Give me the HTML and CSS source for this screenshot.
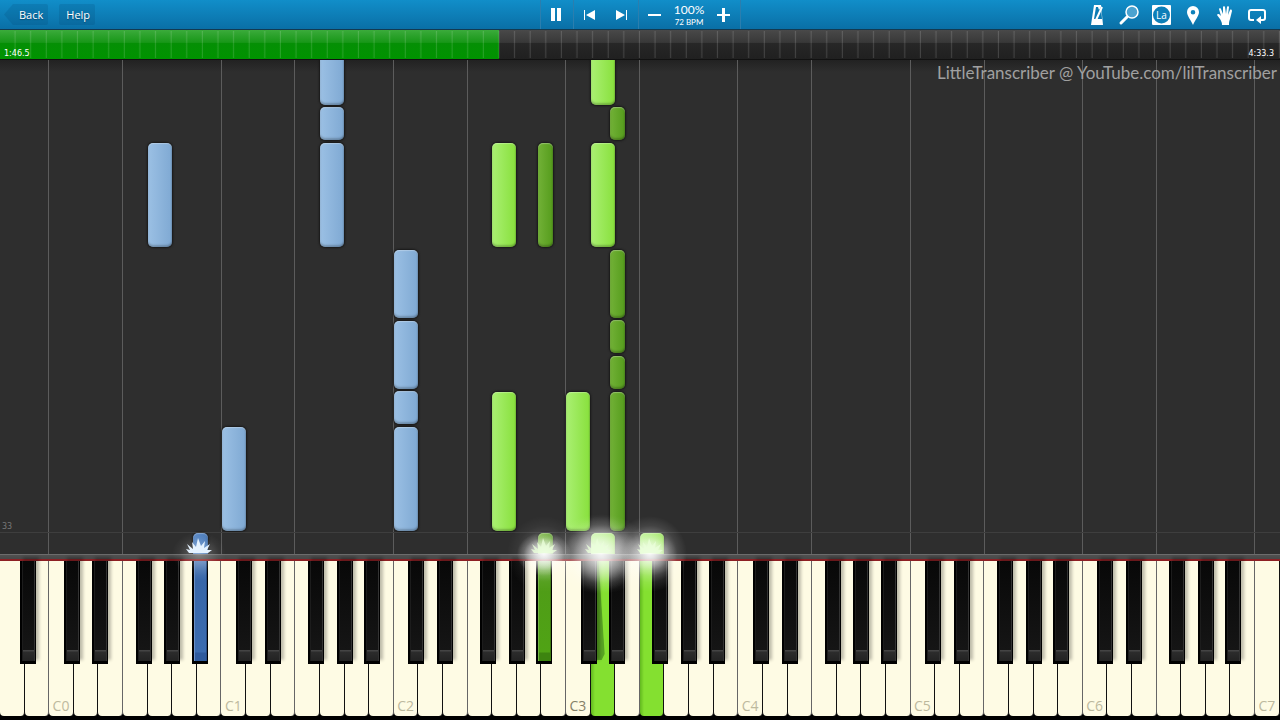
FILE: index.html
```html
<!DOCTYPE html>
<html lang="en">
<head>
    <meta charset="UTF-8">
    <meta name="viewport" content="width=device-width, initial-scale=1.0">
    <title>Piano Player</title>
    <link rel="stylesheet" href="styles.css">
</head>
<body>
    <header class="toolbar">
        <nav class="nav">
            <button class="nav-btn back-btn"><span>Back</span></button>
            <button class="nav-btn">Help</button>
        </nav>
        <div class="transport">
            <div class="group">
                <button class="icon-btn" aria-label="Pause">
                    <svg viewBox="0 0 24 24"><path d="M6 5h4v13H6zM12 5h4v13h-4z"/></svg>
                </button>
            </div>
            <div class="group">
                <button class="icon-btn" aria-label="Previous">
                    <svg viewBox="0 0 24 24"><path d="M6 7h1v10H6zM17 7v10l-9-5z"/></svg>
                </button>
                <button class="icon-btn" aria-label="Next">
                    <svg viewBox="0 0 24 24"><path d="M16 7h1v10h-1zM6 7v10l9-5z"/></svg>
                </button>
            </div>
            <div class="group">
                <button class="icon-btn" aria-label="Slower">
                    <svg viewBox="0 0 24 24"><path d="M5 11h13v2H5z"/></svg>
                </button>
                <div class="tempo">
                    <span class="percent">100%</span>
                    <span class="bpm">72 BPM</span>
                </div>
                <button class="icon-btn" aria-label="Faster">
                    <svg viewBox="0 0 24 24"><path d="M5 11h13v2H5zM10 5h3v14h-3z"/></svg>
                </button>
            </div>
        </div>
        <div class="tools">
            <button class="icon-btn" aria-label="Metronome">
                <svg viewBox="0 0 24 24">
                    <path d="M9 2h7l2 20H6z"/>
                    <path class="cut" d="M9 16l2-12h2l1 3 2-3 1 12z"/>
                    <path class="line" d="M11 17l6-13"/>
                </svg>
            </button>
            <button class="icon-btn" aria-label="Zoom">
                <svg viewBox="0 0 24 24">
                    <circle class="lens" cx="15" cy="9" r="6"/>
                    <path class="handle" d="M10 14l-6 6"/>
                </svg>
            </button>
            <button class="icon-btn" aria-label="Note names">
                <svg viewBox="0 0 24 24">
                    <rect x="3" y="2" width="19" height="20" rx="1"/>
                    <circle class="disc" cx="12.500" cy="12" r="8.500"/>
                    <text x="12.500" y="16" text-anchor="middle">La</text>
                </svg>
            </button>
            <button class="icon-btn" aria-label="Marker">
                <svg viewBox="0 0 24 24">
                    <path fill-rule="evenodd" d="M12 3a6 6 0 0 1 6 6c0 4-4 8-6 13C10 17 6 13 6 9a6 6 0 0 1 6-6zm0 4a2.300 2.300 0 1 0 0 4.600A2.300 2.300 0 0 0 12 7z"/>
                </svg>
            </button>
            <button class="icon-btn" aria-label="Hands">
                <svg viewBox="0 0 24 24">
                    <path d="M9 22c0-3-1-4-2-6l-3-4c0-1 1-1 2-1l2 2L6 6c0-1 2-1 2 0l2 5V4c0-1 2-1 2 0l1 7 1-7c0-1 2-1 2 0l-1 8 2-5c1-1 2 0 2 1l-2 8c-1 3-1 3-1 6z"/>
                </svg>
            </button>
            <button class="icon-btn" aria-label="Loop">
                <svg viewBox="0 0 24 24">
                    <path class="loop" d="M9 17H6q-2 0-2-2V9q0-2 2-2h12q2 0 2 2v6q0 2-2 2h-2"/>
                    <path d="M16 13v8l-5-4z"/>
                </svg>
            </button>
        </div>
    </header>

    <div class="timeline">
        <div class="played" id="played"></div>
        <div class="ticks"></div>
        <span class="time">1:46.5</span>
        <span class="time">4:33.3</span>
    </div>

    <main class="stage">
        <div class="roll">
            <div class="lanes" id="lanes"></div>
            <div class="notes" id="notes"></div>
            <div class="bar-line"><span>33</span></div>
            <p class="watermark">LittleTranscriber @ YouTube.com/lilTranscriber</p>
        </div>
        <div class="rail"></div>
        <div class="keyboard" id="keyboard"></div>
        <div class="effects" id="effects"></div>
    </main>

    <script src="script.js"></script>
</body>
</html>
```
FILE: styles.css
```css
* {
    box-sizing: border-box;
}
body {
    margin: 0;
    min-height: 100vh;
    display: flex;
    flex-direction: column;
    background-color: #000;
    color: #fff;
    font-family: "Open Sans", "Noto Sans", sans-serif;
    overflow: hidden;
}

/* Toolbar */
.toolbar {
    display: grid;
    grid-template-columns: 1fr auto 1fr;
    height: 30px;
    background: linear-gradient(#118ec9, #0a6fa6);
    border-bottom: 1px solid #123a52;
}
.nav {
    display: flex;
    align-items: center;
    gap: 11px;
    padding-left: 4px;
}
button {
    border: none;
    padding: 0;
    background: none;
    color: #fff;
    font-family: inherit;
    cursor: pointer;
}
.nav-btn {
    height: 21px;
    padding: 0 5px 0 7px;
    font-size: 11px;
    line-height: 20px;
    font-weight: 500;
    background-color: rgba(0, 55, 95, 0.15);
    border-radius: 2px;
    text-shadow: 0 1px 1px #064a70;
}
.back-btn {
    padding-left: 15px;
    clip-path: polygon(0 50%, 9px 0, 100% 0, 100% 100%, 9px 100%);
}
.transport,
.group {
    display: flex;
    align-items: center;
}
.group {
    height: 29px;
    border-left: 1px solid #2b7eae;
}
.group:last-child {
    border-right: 1px solid #2b7eae;
}
.icon-btn {
    width: 32px;
    height: 29px;
    display: flex;
    align-items: center;
    justify-content: center;
}
.icon-btn svg {
    width: 24px;
    height: 24px;
    fill: #fff;
}
.tempo {
    width: 37px;
    display: flex;
    flex-direction: column;
    align-items: center;
    white-space: nowrap;
    padding-bottom: 1px;
    font-family: Lato, sans-serif;
}
.percent {
    font-size: 12px;
    line-height: 15px;
}
.bpm {
    font-size: 8px;
    line-height: 10px;
}
.tools {
    display: flex;
    justify-content: flex-end;
    padding-right: 7px;
}
.tools .cut {
    fill: #0c7bb3;
}
.tools .line {
    stroke: #fff;
    stroke-width: 2;
}
.tools .lens {
    fill: #4ba3d0;
    stroke: #fff;
    stroke-width: 1.5;
}
.tools .handle {
    stroke: #fff;
    stroke-width: 3;
    stroke-linecap: round;
}
.tools .disc {
    fill: #0d7fb8;
}
.tools text {
    font-size: 10px;
}
.tools .loop {
    fill: none;
    stroke: #fff;
    stroke-width: 2;
}

/* Timeline */
.timeline {
    position: relative;
    display: flex;
    justify-content: space-between;
    align-items: flex-end;
    height: 30px;
    padding: 0 6px 0 4px;
    background: linear-gradient(#494949, #383838 43%, #272727 44%, #202020);
    border-bottom: 1px solid #111;
}
.played {
    position: absolute;
    inset: 0 auto 0 0;
    background: linear-gradient(#3bab3b, #189718 43%, #058f05 44%, #009300);
}
.ticks {
    position: absolute;
    inset: 1px 0;
    background: linear-gradient(90deg, transparent 14px, rgba(255, 255, 255, 0.15) 15px);
    background-size: calc(100% / 82) 100%;
}
.time {
    position: relative;
    font-family: "DejaVu Sans", sans-serif;
    font-size: 8px;
    line-height: 10px;
}

/* Piano roll */
.stage {
    position: relative;
    flex: 1;
    display: flex;
    flex-direction: column;
}
.roll {
    position: relative;
    flex: 1;
    min-height: 240px;
    background: linear-gradient(#222, #2e2e2e 12px);
}
.lanes {
    position: absolute;
    inset: 0;
    display: grid;
    grid-template-columns: repeat(52, 1fr);
}
.lane.split {
    border-right: 1px solid #5c5c5c;
}
.notes {
    position: absolute;
    inset: 0;
    overflow: hidden;
}
.note {
    position: absolute;
    width: 24px;
    border-radius: 5px;
    box-shadow: 0 0 2px 1px #181818,
        inset 0 1px 1px rgba(255, 255, 255, 0.3),
        inset 0 -2px 2px rgba(0, 0, 0, 0.22),
        inset -1px 0 1px rgba(0, 0, 0, 0.1);
}
.note.black {
    width: 15px;
}
.note.left {
    background: linear-gradient(90deg, #9bc0e4, #7fa9d3);
}
.note.right {
    background: linear-gradient(90deg, #aaf073, #88e03c);
}
.note.left.black {
    background: linear-gradient(90deg, #5a88c4, #4879b8);
}
.note.right.black {
    background: linear-gradient(90deg, #72b137, #559c1c);
}
.bar-line {
    position: absolute;
    left: 0;
    right: 0;
    bottom: 21px;
    border-bottom: 1px solid #3e3e3e;
    padding-left: 2px;
    color: #777;
    font-family: "DejaVu Sans", sans-serif;
    font-size: 8px;
    line-height: 10px;
}
.watermark {
    position: relative;
    margin: 0;
    padding: 3px 3px 0 0;
    text-align: right;
    color: #a0a0a0;
    font-family: Lato, sans-serif;
    font-size: 17px;
    line-height: 20px;
}

/* Keyboard */
.rail {
    height: 7px;
    background: linear-gradient(#6c6c6c 1px, #505050 1px, #484848 5px, #8d2024 5px);
}
.keyboard {
    display: flex;
    height: 159px;
    padding-bottom: 4px;
    background-color: #000;
}
.key {
    position: relative;
    flex: 1;
    display: flex;
    align-items: flex-end;
    justify-content: center;
    background-color: #fefbe4;
    border-right: 1px solid #111;
    border-radius: 0 0 4px 4px;
    color: #bdb99e;
    font-size: 14px;
    line-height: 20px;
}
.key.split {
    border-right-color: #666;
}
.key.pressed {
    background: linear-gradient(90deg, #62b81f, #84e030 4px);
}
.key.current {
    color: #858169;
}
.black-key {
    position: absolute;
    z-index: 1;
    top: 0;
    width: 16px;
    height: 103px;
    border: solid #000;
    border-width: 0 1px 3px 2px;
    background: linear-gradient(#080808, #151515 89px, #444 89px, #444 90px, #2c2c2c 91px, #222);
    box-shadow: inset 1px 0 #1c1c1c, inset -1px 0 #333, 3px -4px 3px rgba(0, 0, 0, 0.25);
}
.black-key.left {
    background: linear-gradient(#5b83ba, #3766a8 20px, #3c6db0 91px, #2f5b9d 92px);
    box-shadow: inset 1px 0 #6b91c6, inset -1px 0 #294d83;
}
.black-key.right {
    background: linear-gradient(#8ebd6c, #4f9c17 20px, #50a315 91px, #3d8410 92px);
    box-shadow: inset 1px 0 #73b340, inset -1px 0 #3e7c12;
}
.shade {
    position: absolute;
    left: 4px;
    top: 0;
    width: 10px;
    height: 99px;
    background-color: #58a323;
    clip-path: polygon(0 0, 40% 0, 100% 94%, 70% 100%, 0 100%);
}

/* Glow where a note meets the keys */
.effects {
    position: absolute;
    left: 0;
    right: 0;
    bottom: 166px;
    z-index: 2;
    pointer-events: none;
}
.glow {
    position: absolute;
    transform: translate(-50%, -50%);
    border-radius: 50%;
    background: radial-gradient(closest-side, rgba(255, 255, 255, 0.75), rgba(255, 255, 255, 0.4) 40%, rgba(255, 255, 255, 0.1) 75%, transparent);
}
.glow.small {
    width: 54px;
    height: 44px;
}
.glow.medium {
    width: 74px;
    height: 76px;
}
.glow.large {
    width: 100px;
    height: 80px;
}
.glow.faint {
    opacity: 0.4;
}
.spark {
    position: absolute;
    bottom: 1px;
    width: 26px;
    height: 16px;
    transform: translateX(-50%);
    fill: #e4f2ff;
}
.spark.right {
    fill: #eaffda;
    opacity: 0.8;
}
```
FILE: script.js
```js
const KEYS = 52;
const STEP = 35.5;   // height of one sixteenth
const BASE = 21;     // distance from bar line to the keys
const PLAYED = 106.5 / 273.3;

// black key offset from the boundary after each white key (A, B, C, D, E, F, G)
const BLACK = [5, null, 0, 4, null, -2, 2];

// [white key, start, length, hand, is black]
const notes = [
    [6, 8, 3, 'left'],
    [9, 0, 3, 'left'],
    [13, 8, 3, 'left'],
    [13, 11, 1, 'left'],
    [13, 12, 2, 'left'],
    [16, 0, 3, 'left'],
    [16, 3, 1, 'left'],
    [16, 4, 2, 'left'],
    [16, 6, 2, 'left'],
    [7, -1, 1, 'left', true],
    [20, 0, 4, 'right'],
    [20, 8, 3, 'right'],
    [23, 0, 4, 'right'],
    [24, 8, 3, 'right'],
    [24, 12, 2, 'right'],
    [24, -1, 1, 'right'],
    [26, -1, 1, 'right'],
    [21, 8, 3, 'right', true],
    [21, -1, 1, 'right', true],
    [24, 0, 4, 'right', true],
    [24, 4, 1, 'right', true],
    [24, 5, 1, 'right', true],
    [24, 6, 2, 'right', true],
    [24, 11, 1, 'right', true]
];

const pressedWhite = [24, 26];
const pressedBlack = { 7: 'left', 21: 'right' };

function add(parent, className) {
    const el = document.createElement('div');
    el.className = className;
    parent.appendChild(el);
    return el;
}

function percent(key) {
    return key / KEYS * 100 + '%';
}

function drawKeyboard() {
    const lanes = document.getElementById('lanes');
    const keyboard = document.getElementById('keyboard');
    for (let i = 0; i < KEYS; i++) {
        const degree = i % 7;
        // octaves are split before C and F
        const split = degree === 1 || degree === 4 ? ' split' : '';
        add(lanes, 'lane' + split);
        const key = add(keyboard, 'key' + split);
        if (pressedWhite.includes(i)) {
            key.classList.add('pressed');
        }
        if (i === 24) {
            add(key, 'shade');
        }
        if (degree === 2) {
            const label = document.createElement('span');
            label.textContent = 'C' + (i - 2) / 7;
            key.appendChild(label);
            if (i === 23) {
                key.classList.add('current');
            }
        }
        if (BLACK[degree] !== null && i < KEYS - 1) {
            const black = add(key, 'black-key ' + (pressedBlack[i] || ''));
            black.style.left = `calc(100% + ${BLACK[degree] - 9}px)`;
        }
    }
}

function drawNotes() {
    const container = document.getElementById('notes');
    notes.forEach(([key, start, length, hand, black]) => {
        const note = add(container, 'note ' + hand + (black ? ' black' : ''));
        note.style.left = black
            ? `calc(${percent(key + 1)} + ${BLACK[key % 7] - 9}px)`
            : percent(key);
        note.style.bottom = Math.round(BASE + start * STEP) + 2 + 'px';
        note.style.height = Math.round(length * STEP) - 3 + 'px';
    });
}

function drawEffects() {
    const effects = document.getElementById('effects');
    const glows = [
        [8.1, 'small faint'],
        [22.1, 'small'],
        [22.1, 'small'],
        [22.1, 'medium faint'],
        [24.4, 'large'],
        [24.4, 'medium'],
        [26.4, 'medium'],
        [26.4, 'small']
    ];
    glows.forEach(([x, size]) => {
        add(effects, 'glow ' + size).style.left = percent(x);
    });
    [[8.1, 'left'], [22.1, 'right'], [24.3, 'right'], [26.4, 'right']].forEach(([x, hand]) => {
        const svg = document.createElementNS('http://www.w3.org/2000/svg', 'svg');
        svg.setAttribute('viewBox', '0 0 26 16');
        svg.setAttribute('class', 'spark ' + hand);
        svg.innerHTML = '<path d="M3 16L0 12l4 1-3-6 6 5-1-7 4 5 2-9 3 8 4-5-1 7 6-4-3 6 5 0-4 3z"/>';
        svg.style.left = percent(x);
        effects.appendChild(svg);
    });
}

document.getElementById('played').style.width = PLAYED * 100 + '%';
drawKeyboard();
drawNotes();
drawEffects();
```
